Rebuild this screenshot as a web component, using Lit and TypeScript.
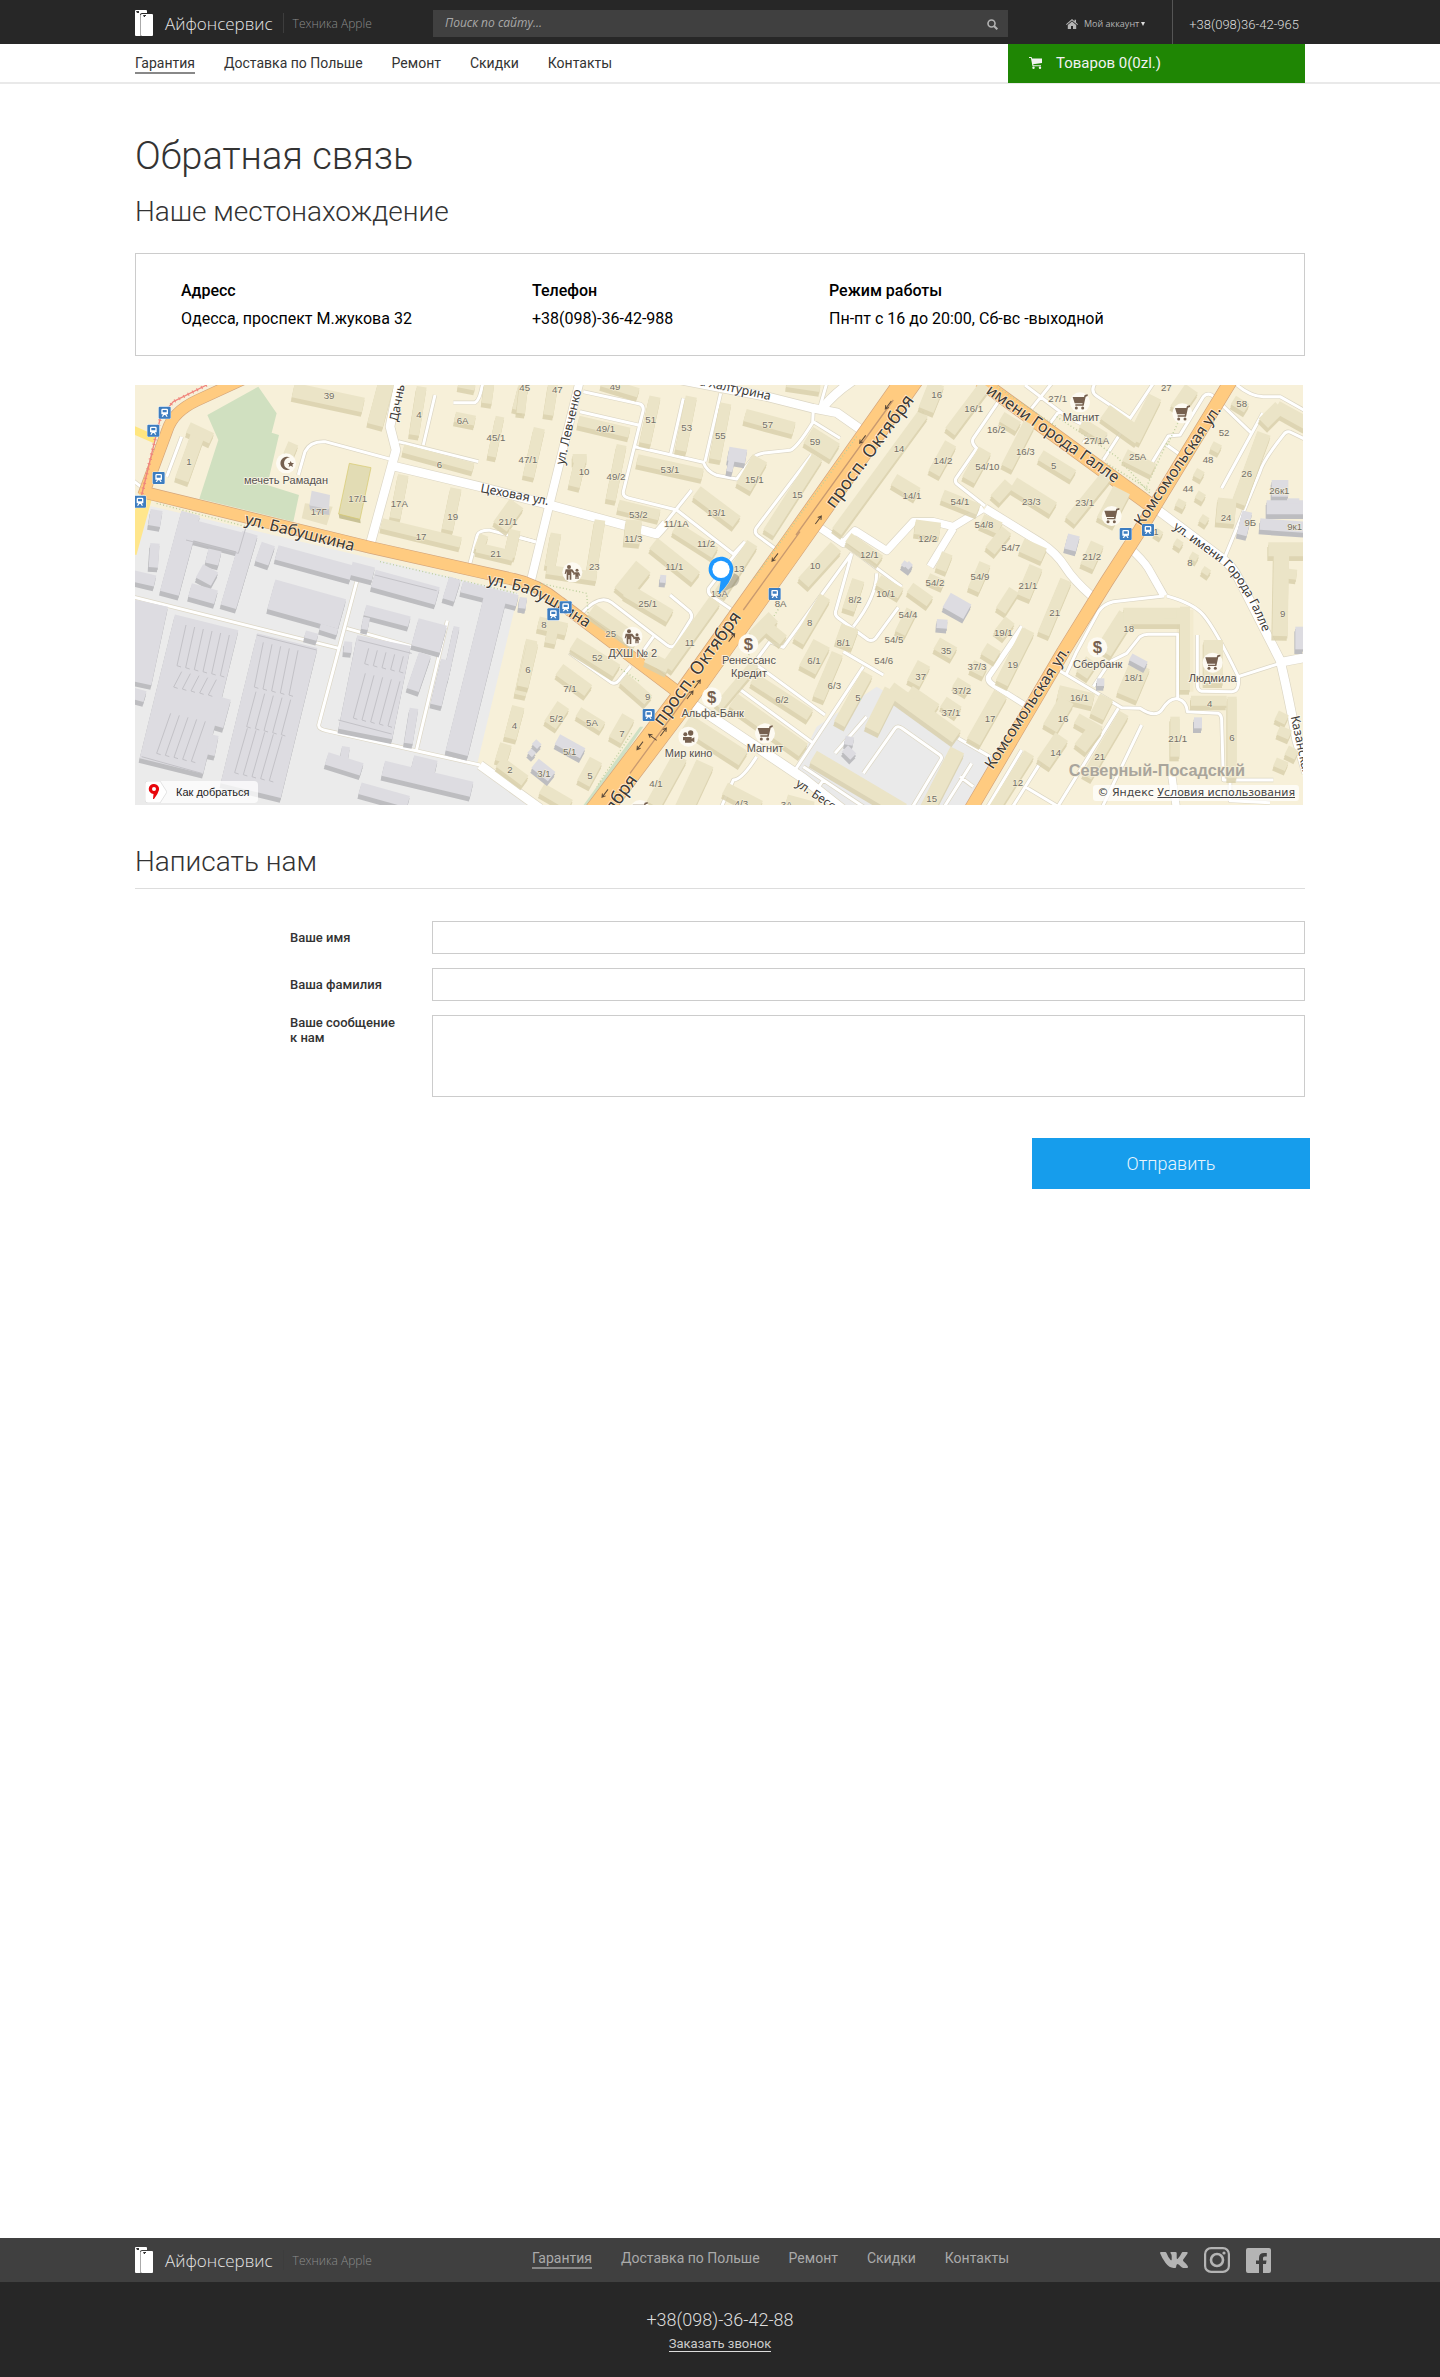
import { LitElement, html, css, svg } from "lit";
import { customElement, property } from "lit/decorators.js";

type Seg = [number, number, number, number, number];
type Mark = [string, number, number];

/* The map is drawn in three side by side sheets, each with its own origin. */
interface Sheet {
  dx: number;
  wide: [number, string][];
  lanes: string;
  beige: Seg[];
  gray: Seg[];
  numbers: Mark[];
}

const WEST: Sheet = {
  dx: 0,
  wide: [
    [26, "M790 258L1050 320L1260 375L1580 462L1608 430"],
    [26, "M808 0L780 140L798 210L720 495"],
    [26, "M1050 1155L1230 1285"],
  ],
  lanes:
    "M0 649L627 805M680 605L566 1035Q565 1048 590 1052L1050 1155M650 745L925 822M952 722L860 1108M155 170L110 290M505 285L525 215Q540 183 585 185L790 240M805 185L1045 245M915 45L880 195M970 68L1035 68Q1050 60 1058 10M1018 557L1042 465Q1048 450 1080 451L1215 485M0 295L40 325",
  beige: [
    [490, 30, 700, 75, 44], [768, 10, 735, 135, 48], [875, 20, 852, 165, 30], [975, 110, 1035, 122, 30],
    [1110, 110, 1085, 230, 26], [820, 205, 1030, 262, 26], [205, 160, 155, 300, 42], [175, 142, 245, 175, 34],
    [490, 190, 475, 225, 32], [820, 285, 795, 415, 32], [978, 325, 952, 450, 34], [755, 430, 992, 487, 32],
    [1040, 502, 1150, 528, 30], [1062, 465, 1045, 510, 28], [1155, 450, 1137, 530, 34], [1160, 370, 1110, 440, 50],
    [1078, 10, 1070, 70, 30], [1180, 20, 1162, 90, 32], [985, 12, 1035, 22, 20], [1205, 780, 1170, 945, 34],
    [1165, 980, 1140, 1075, 38], [1128, 1092, 1112, 1145, 36], [1108, 1145, 1185, 1202, 36],
  ],
  gray: [
    [182, 400, 118, 640, 58], [360, 460, 295, 680, 48], [170, 445, 345, 490, 60], [255, 510, 245, 552, 40],
    [242, 565, 220, 605, 52], [180, 630, 258, 652, 42], [80, 390, 72, 438, 36], [75, 490, 70, 562, 28],
    [10, 588, 75, 603, 34], [415, 492, 395, 550, 42], [440, 517, 665, 578, 44], [663, 565, 730, 582, 40],
    [730, 595, 922, 648, 54], [975, 595, 955, 660, 36], [995, 620, 1162, 662, 34], [1095, 655, 980, 1120, 68],
    [424, 643, 636, 702, 92], [705, 690, 838, 725, 32], [710, 712, 703, 748, 20], [855, 755, 940, 778, 84],
    [65, 670, 15, 905, 100], [230, 727, 124, 1158, 196], [472, 782, 362, 1232, 186], [762, 782, 706, 1062, 164],
    [885, 822, 848, 930, 38], [980, 740, 945, 900, 18], [950, 840, 918, 975, 34], [288, 955, 265, 1040, 30],
    [252, 1065, 240, 1125, 28], [852, 985, 835, 1090, 26], [590, 1135, 695, 1168, 38], [648, 1100, 640, 1150, 24],
    [760, 1165, 1025, 1228, 46], [848, 1145, 918, 1162, 40], [690, 1225, 835, 1265, 36], [1182, 655, 1175, 685, 18],
    [655, 785, 652, 818, 24], [525, 762, 562, 772, 22], [10, 940, 45, 950, 34], [570, 740, 622, 756, 20],
  ],
  numbers: [
    ["39", 597, 58], ["4", 867, 115], ["6А", 998, 132], ["45/1", 1098, 184], ["1", 177, 255],
    ["6", 928, 263], ["17/1", 683, 366], ["17Г", 566, 405], ["17А", 808, 381], ["19", 968, 421], ["17", 873, 479],
    ["21/1", 1134, 434], ["21", 1097, 532], ["4", 1153, 1048], ["2", 1140, 1178], ["47/1", 1194, 250],
  ],
};

const CENTER: Sheet = {
  dx: 1170,
  wide: [
    [24, "M180 0L88 375L32 605"],
    [26, "M430 -10L740 50L880 85L950 98L1027 152M905 88Q940 40 1010 -5"],
    [22, "M895 440L970 490L1005 452L1100 512L1180 425L1240 425L1300 440L1390 385M1300 445L1230 560"],
    [28, "M515 970L850 1195L970 1290"],
    [14, "M-10 1228L60 1285"],
  ],
  lanes:
    "M190 35L360 72Q374 78 368 98L310 335Q308 350 325 354L470 390L640 522L675 485M180 95L355 135M345 200L550 247Q560 275 590 286L650 297L700 232Q715 220 740 218L810 211Q830 205 878 128L880 85M490 55L452 222M602 40L555 245M875 225L708 445Q702 458 712 466L765 505M515 330L415 455M675 485L566 625Q562 640 575 648L640 692M450 645L510 695Q520 710 510 722L465 795Q456 806 442 796L275 668Q240 640 185 700M400 770L370 812M148 818L275 908Q287 914 296 902L332 858M920 10L900 80M880 125L960 175M995 520L790 802L750 785L605 980M970 490L1145 620M1070 580Q1070 650 1000 740M995 522L948 690Q942 704 955 714L1045 780Q1056 785 1066 776L1135 682M655 925L880 1090M710 855L915 1005M970 815L1090 885M1030 860L820 1178M1030 1180L1125 1045Q1132 1036 1145 1044L1260 1125Q1268 1132 1262 1140L1175 1285M1040 1010L945 1120M600 1290L640 1200Q665 1200 710 1130M850 1160L1030 1280M910 1200L890 1230M0 472L48 486",
  beige: [
    [100, 10, 85, 105, 30], [12, 10, 2, 100, 26], [245, 5, 355, 38, 28], [405, 50, 375, 190, 34],
    [175, 122, 328, 158, 30], [514, 50, 482, 212, 34], [617, 70, 585, 238, 34], [675, 105, 822, 145, 38],
    [865, 165, 945, 215, 56], [352, 238, 548, 282, 32], [200, 235, 158, 235, 26], [182, 235, 162, 320, 34],
    [305, 195, 272, 360, 30], [295, 375, 418, 405, 32], [342, 420, 335, 490, 48], [58, 145, 25, 290, 34],
    [720, 235, 670, 322, 50], [892, 230, 745, 458, 36], [530, 335, 650, 425, 40], [465, 442, 585, 518, 36],
    [400, 490, 528, 592, 40], [697, 490, 600, 640, 36], [108, 460, 90, 560, 32], [240, 420, 212, 590, 32],
    [80, 568, 230, 590, 28], [370, 560, 305, 640, 56], [320, 630, 450, 708, 42], [215, 688, 350, 782, 38],
    [585, 660, 440, 862, 38], [380, 830, 445, 862, 36], [160, 790, 290, 872, 42], [55, 728, 140, 748, 38],
    [100, 740, 90, 790, 32], [38, 790, 8, 920, 34], [118, 868, 205, 932, 40], [310, 895, 385, 960, 36],
    [130, 975, 90, 1035, 42], [175, 995, 248, 1040, 32], [325, 1010, 285, 1080, 42], [228, 1140, 190, 1210, 42],
    [65, 1225, 150, 1275, 34], [1210, 100, 950, 455, 34], [1122, 298, 1192, 340, 38], [985, 472, 1080, 540, 32],
    [948, 500, 850, 608, 42], [915, 650, 835, 785, 36], [760, 710, 700, 770, 40], [735, 735, 790, 780, 34],
    [1015, 600, 985, 690, 38], [1075, 600, 1142, 640, 34], [990, 740, 970, 795, 54], [905, 790, 862, 870, 56],
    [952, 820, 895, 955, 36], [1042, 880, 958, 1032, 36], [700, 895, 870, 1005, 36], [640, 960, 850, 1110, 46],
    [705, 850, 595, 980, 28], [500, 1025, 670, 1135, 50], [480, 1130, 400, 1275, 46], [555, 1150, 490, 1290, 56],
    [615, 1225, 720, 1280, 38], [880, 1130, 1150, 1290, 42], [800, 1258, 880, 1280, 30], [800, 10, 900, 25, 22],
    [1175, 690, 1140, 760, 34],
  ],
  gray: [
    [655, 205, 648, 246, 54], [635, 240, 628, 275, 18], [1148, 548, 1172, 566, 18], [430, 585, 428, 608, 18],
    [112, 1078, 188, 1120, 34], [45, 1150, 95, 1190, 36], [10, 652, 6, 685, 22], [42, 1085, 58, 1100, 20],
    [28, 1112, 42, 1125, 18], [975, 1105, 1000, 1130, 26], [990, 1070, 985, 1095, 26],
  ],
  numbers: [
    ["45", 14, 34], ["47", 112, 39], ["49", 285, 31], ["51", 392, 129], ["49/1", 257, 157], ["53", 500, 153],
    ["55", 601, 178], ["57", 743, 144], ["59", 885, 196], ["14", 1137, 215], ["53/1", 450, 278], ["10", 192, 286],
    ["49/2", 288, 299], ["15/1", 703, 308], ["15", 832, 354], ["14/1", 1176, 357], ["13/1", 589, 407],
    ["53/2", 355, 413], ["11/1А", 469, 440], ["11/3", 340, 487], ["11/2", 558, 502], ["12/1", 1048, 533],
    ["11/1", 463, 570], ["23", 223, 570], ["13", 657, 576], ["10", 885, 566], ["13А", 598, 652], ["8/2", 1005, 668],
    ["10/1", 1097, 650], ["8А", 782, 680], ["25/1", 383, 681], ["54/4", 1164, 714], ["8", 869, 739], ["8", 72, 744],
    ["25", 272, 770], ["11", 509, 799], ["8/1", 970, 797], ["54/5", 1122, 788], ["52", 232, 843], ["6/1", 882, 853],
    ["54/6", 1091, 853], ["6", 24, 879], ["7/1", 150, 936], ["6/3", 943, 926], ["9", 383, 960], ["5", 1014, 962],
    ["6/2", 786, 969], ["5/2", 109, 1025], ["5А", 216, 1039], ["7", 306, 1070], ["5/1", 149, 1124],
    ["3/1", 72, 1191], ["5", 210, 1196], ["4/1", 408, 1222], ["4/3", 664, 1280], ["3А", 800, 1284],
  ],
};

const EAST: Sheet = {
  dx: 2340,
  wide: [
    [24, "M225 385L395 490Q440 520 465 560Q490 600 545 648"],
    [22, "M655 500Q700 540 715 565L762 648"],
    [26, "M730 380L930 530Q970 560 985 595L1110 840Q1130 920 1160 1080L1190 1180M1105 848L1190 832"],
    [16, "M338 740L236 890Q232 905 250 915L345 975"],
    [22, "M785 1185L800 1290"],
  ],
  lanes:
    "M265 65L190 175Q182 188 200 205L138 295Q132 306 145 315L225 378M345 15L470 110L590 170M425 10L365 85M555 10Q540 35 560 48L660 115L730 10M660 115L580 240M450 90L420 130M548 145L520 190M725 250L775 168L810 165L880 50Q890 38 905 45L1025 160M1058 100L935 325M770 195L808 222M975 10Q1020 50 1060 50L1110 50L1190 95M1190 180L1140 156Q1128 152 1120 165Q1060 240 1050 275L945 530M762 648L610 665Q580 672 565 695L500 815L470 880M770 648Q850 670 880 705Q915 745 985 890Q990 935 965 935L875 934Q862 930 862 915L862 765M985 890L1110 850M445 870L635 983L690 985Q735 1015 755 990Q780 950 805 957Q830 965 832 995L925 1000Q935 1005 935 1020L940 1200L1090 1200M550 920L600 845L650 820L690 770Q700 763 715 763L803 763L803 955M625 985L440 1285M695 1035L575 1285M335 1110L230 1285M390 1150L305 1285M345 1220L445 1280M145 1075L240 1130M185 1150L100 1285M150 1190L190 1220M960 1205L960 1262L1080 1268",
  beige: [
    [80, 10, 48, 90, 48], [225, 15, 120, 155, 36], [275, 110, 325, 140, 32], [358, 130, 290, 262, 36],
    [122, 190, 72, 280, 38], [225, 210, 175, 300, 42], [392, 225, 490, 285, 34], [310, 310, 430, 385, 42],
    [298, 310, 255, 358, 36], [595, 280, 480, 422, 36], [635, 330, 585, 425, 56], [585, 95, 690, 170, 50],
    [735, 50, 670, 180, 42], [845, 25, 800, 90, 46], [645, 225, 730, 268, 38], [515, 128, 585, 172, 30],
    [970, 60, 1010, 85, 30], [1062, 160, 985, 370, 42], [952, 355, 945, 430, 56], [1060, 130, 1110, 80, 40],
    [1100, 80, 1190, 130, 38], [905, 195, 930, 208, 26], [855, 275, 878, 288, 26], [800, 365, 824, 378, 24],
    [872, 412, 892, 425, 24], [860, 342, 882, 355, 24], [735, 452, 755, 465, 20], [795, 484, 815, 497, 22],
    [878, 566, 898, 580, 20], [842, 524, 862, 536, 22], [1115, 490, 1110, 768, 46], [1075, 508, 1190, 508, 42],
    [1110, 578, 1160, 584, 30], [98, 345, 205, 388, 34], [215, 420, 270, 445, 38], [15, 440, 90, 450, 44],
    [290, 450, 240, 512, 36], [335, 495, 402, 525, 42], [112, 520, 92, 570, 34], [225, 550, 190, 630, 36],
    [562, 490, 530, 560, 42], [378, 560, 340, 650, 42], [312, 630, 272, 692, 34], [468, 600, 400, 762, 36],
    [0, 622, 60, 665, 34], [55, 592, 100, 612, 26], [300, 720, 265, 765, 36], [80, 790, 132, 820, 40],
    [222, 805, 262, 830, 38], [185, 855, 225, 875, 34], [42, 850, 10, 910, 42], [135, 905, 175, 930, 32],
    [100, 965, 145, 995, 36], [355, 750, 275, 910, 40], [272, 940, 190, 1085, 44], [650, 705, 580, 815, 52],
    [640, 708, 840, 708, 50], [825, 680, 825, 930, 30], [545, 840, 515, 885, 40], [690, 855, 650, 950, 64],
    [445, 935, 550, 960, 40], [470, 960, 420, 1045, 48], [560, 1040, 510, 1105, 42], [500, 1015, 570, 1055, 34],
    [590, 950, 560, 1010, 44], [455, 1070, 400, 1150, 46], [642, 1000, 530, 1190, 32], [358, 1120, 250, 1290, 34],
    [795, 1010, 795, 1130, 28], [843, 962, 950, 962, 30], [966, 950, 966, 1195, 28], [910, 780, 910, 910, 58],
    [1100, 1005, 1130, 1020, 30], [1105, 1050, 1140, 1065, 30], [1130, 1110, 1160, 1125, 30],
    [1095, 1145, 1130, 1160, 28], [142, 1110, 50, 1290, 46], [-60, 925, 140, 1070, 44], [-55, 930, -115, 1050, 46],
    [0, 930, 80, 985, 30], [780, 690, 780, 715, 40],
  ],
  gray: [
    [1110, 300, 1110, 350, 50], [1070, 382, 1190, 382, 42], [1050, 432, 1190, 442, 34], [1012, 395, 995, 465, 30],
    [492, 465, 480, 510, 36], [110, 660, 172, 695, 50], [97, 718, 95, 745, 32], [662, 830, 708, 855, 22],
    [572, 895, 572, 918, 22], [864, 1012, 864, 1045, 24], [1168, 740, 1168, 808, 24], [1150, 355, 1150, 370, 36],
    [-10, 550, 2, 562, 20],
  ],
  numbers: [
    ["16", 80, 55], ["16/1", 191, 95], ["27/1", 443, 67], ["27", 769, 32], ["58", 995, 80], ["16/2", 259, 160],
    ["52", 942, 168], ["27/1А", 560, 191], ["16/3", 346, 224], ["25А", 683, 240], ["14/2", 99, 252], ["54/10", 232, 271],
    ["5", 431, 267], ["48", 894, 249], ["26", 1010, 292], ["44", 834, 337], ["26к1", 1108, 341], ["54/1", 150, 375],
    ["23/3", 364, 375], ["23/1", 524, 379], ["24", 948, 422], ["9Б", 1021, 439], ["9к1", 1154, 449],
    ["54/8", 222, 443], ["12/2", 53, 487], ["54/7", 302, 513], ["21/2", 545, 539], ["8", 840, 557], ["54/2", 75, 618],
    ["54/9", 210, 600], ["21/1", 354, 628], ["9", 1118, 710], ["21", 434, 707], ["18", 656, 757], ["19/1", 280, 769],
    ["35", 108, 821], ["19", 308, 864], ["37/3", 201, 870], ["37", 32, 901], ["18/1", 671, 902], ["37/2", 155, 941],
    ["16/1", 508, 963], ["4", 899, 981], ["37/1", 123, 1009], ["17", 240, 1027], ["16", 459, 1027], ["6", 966, 1083],
    ["21/1", 803, 1086], ["14", 437, 1129], ["21", 569, 1141], ["12", 323, 1218], ["15", 65, 1266], ["1", 738, 465],
  ],
};

const SHEETS = [WEST, CENTER, EAST];

/* x, y, run x, run y, count: roof ribs on the long factory halls */
const RIBS: Seg[] = [
  [168, 735, -27, 122, 6], [155, 875, -24, 46, 5], [122, 1000, -42, 120, 5], [400, 787, -27, 134, 5],
  [378, 935, -28, 105, 5], [352, 1045, -38, 133, 5], [716, 805, -12, 46, 5], [706, 880, -36, 134, 5],
];

const STOPS = [
  [104, 98], [70, 152], [86, 294], [30, 365], [1270, 703], [1307, 682], [1934, 642], [1556, 1005], [2987, 462], [3054, 450],
];
const CARTS = [[1905, 1060], [1530, 1290], [2850, 67], [3157, 100], [2945, 408], [3248, 848]];
const DOLLARS = [[1855, 792], [1745, 952], [2902, 802]];
const FAMILIES = [[1327, 577], [1507, 770]];
const PLACES: Mark[] = [
  ["мечеть Рамадан", 468, 311], ["ДХШ № 2", 1508, 832], ["Ренессанс", 1857, 853], ["Кредит", 1857, 891],
  ["Альфа-Банк", 1748, 1011], ["Мир кино", 1676, 1130], ["Магнит", 1905, 1115], ["Магнит", 2853, 124],
  ["Сбербанк", 2903, 863], ["Людмила", 3248, 905],
];
/* label, x, y, angle, size */
const STREETS: [string, number, number, number, number][] = [
  ["ул. Бабушкина", 342, 432, 14, 48], ["Цеховая ул.", 1050, 336, 11, 37], ["Дачны", 803, 126, -79, 37],
  ["ул. Левченко", 1302, 256, -77, 37], ["на Халтурина", 1684, 10, 12, 37], ["просп. Октября", 2112, 388, -53.5, 54],
  ["просп. Октября", 1596, 1040, -54, 54], ["имени Города Галле", 2566, 38, 35, 48],
  ["Комсомольская ул.", 2588, 1170, -57, 46], ["Комсомольская ул.", 3036, 442, -56, 46],
  ["Казанская", 3482, 1010, 78, 37], ["ул. Бессонова", 1995, 1216, 34, 36],
];

const pathOf = (b: Seg, dy = 0, dx = 0) => `M${b[0] + dx} ${b[1] + dy}L${b[2] + dx} ${b[3] + dy}`;

const blocks = (list: Seg[], kind: string) => svg`
  <g class="side-${kind}">${list.map((b) => svg`<path d=${pathOf(b, 14, -3)} stroke-width=${b[4]} /><path d=${pathOf(b, 7, -1)} stroke-width=${b[4]} />`)}</g>
  <g class="top-${kind}">${list.map((b) => svg`<path d=${pathOf(b)} stroke-width=${b[4]} />`)}</g>`;

@customElement("city-map")
export class CityMap extends LitElement {
  static styles = css`
    :host { display: block; position: relative; height: 420px; overflow: hidden; }
    .canvas { display: block; width: 100%; height: 100%; background: #f7f0d9; }
    .line { fill: none; stroke-linejoin: round; }
    .casing { stroke: #dcd6c4; }
    .white { stroke: #fff; }
    .orange-edge { stroke: #d3a57c; }
    .orange { stroke: #ffcb80; }
    .side-beige { stroke: #dad1ad; opacity: 0.85; }
    .top-beige { stroke: #ebe4c7; }
    .side-gray { stroke: #bdbdc0; }
    .top-gray { stroke: #dddce1; }
    .number { font: 29px "Liberation Sans", sans-serif; fill: #716e66; stroke: #f7f0d9; stroke-width: 3; paint-order: stroke; text-anchor: middle; }
    .place { font: 33px "Liberation Sans", sans-serif; fill: #55514e; stroke: #faf5e6; stroke-width: 5; paint-order: stroke; text-anchor: middle; }
    .street { font-family: "Noto Sans", "Open Sans", sans-serif; fill: #3c3935; stroke: #fff; stroke-opacity: 0.6; stroke-width: 5; paint-order: stroke; }
    .district { font: bold 49px "Liberation Sans", sans-serif; fill: #a9a59c; stroke: #f7f0d9; stroke-width: 5; paint-order: stroke; }
    .dollar { font: bold 50px "Liberation Sans", sans-serif; fill: #76604f; text-anchor: middle; }
    .glyph { fill: #76604f; }
    .route { position: absolute; left: 10px; bottom: 2px; display: flex; align-items: center; gap: 9px; height: 22px; padding: 0 9px 0 0; border: 0; border-radius: 4px; background: rgba(255, 255, 255, 0.75); color: #222; font: 11px "Liberation Sans", sans-serif; cursor: pointer; }
    .route svg { width: 22px; height: 22px; }
    .terms { position: absolute; right: 4px; bottom: 4px; padding: 1px 4px; border-radius: 3px; background: rgba(255, 255, 255, 0.7); color: #444; font: 11px/14px "DejaVu Sans", sans-serif; white-space: nowrap; }
    .terms a { color: inherit; }
  `;

  private roads(extra: number) {
    return SHEETS.map(
      (s) => svg`<g transform="translate(${s.dx} 0)">
        <path d=${s.lanes} stroke-width=${9 + extra} />
        ${s.wide.map(([w, d]) => svg`<path d=${d} stroke-width=${w + extra} />`)}
      </g>`
    );
  }

  private arterials(extra: number) {
    return svg`
      <path d="M345 -5L200 62Q130 95 112 150L40 345" stroke-width=${32 + extra} />
      <path d="M35 335L720 502L1150 598Q1220 612 1290 668L1635 930" stroke-width=${34 + extra} />
      <path d="M2345 -10L1985 500L1672 940L1400 1300" stroke-width=${76 + extra} />
      <path d="M2550 2L3065 378" stroke-width=${40 + extra} />
      <path d="M3310 -10L3030 450L2930 605L2800 815L2515 1300" stroke-width=${38 + extra} />`;
  }

  render() {
    return html`
      <svg class="canvas" viewBox="15 15 3504 1260" preserveAspectRatio="xMidYMid slice" role="img" aria-label="Карта">
        <path fill="#ebebeb" d="M62 378L1165 640L1042 1150L1215 1290H0V560Z" />
        <path fill="#eaeaea" d="M2060 1040L2240 920L2590 1130L2500 1290H2120L1995 1172Z" />
        <path fill="#f3ebcf" d="M3140 690H3190V935H3140Z" />
        <path fill="#d0e0c0" d="M385 20L440 100L425 158L447 165L412 315L507 345L490 425L208 356L265 180L232 105Z" />
        <path fill="#cfe0c4" d="M1540 1040L1370 1290H1350L1530 1040Z" />
        <g class="line"><path d="M0 145L75 178" stroke="#ffe680" stroke-width="24" /><path d="M48 345L0 520" stroke="#ffe68c" stroke-width="40" /></g>
        <g class="line casing">${this.roads(4)}</g>
        <g class="line white">${this.roads(0)}</g>
        <g class="line orange-edge">${this.arterials(4)}</g>
        <g class="line orange">${this.arterials(0)}</g>
        <g class="line" stroke="#c99a6f" stroke-width="4"><path d="M2290 60L1998 465M2010 455L1840 690M1680 935L1500 1180" /></g>
        <g class="line" stroke="#bccf9c" stroke-width="4" stroke-dasharray="3 7">
          <path d="M80 370L350 440M750 545L1160 640M1230 610L1370 640L1375 710M1340 780L1530 905M2180 170L1870 600M2380 95L2130 440M1950 680L1840 850M1505 1060L1400 1220M2600 20L2780 140M2780 110L2960 230L3060 340M3110 190L3045 330M3190 30L3110 200M2930 250L3060 330" />
        </g>
        <g class="line" stroke="#f0857c" stroke-width="4"><path d="M230 15L130 65L92 110L35 345" /><path d="M230 15L130 65L92 110L35 345" stroke-width="10" stroke-dasharray="3 12" /></g>
        ${SHEETS.map((s) => svg`<g class="line" transform="translate(${s.dx} 0)">${blocks(s.beige, "beige")}${blocks(s.gray, "gray")}</g>`)}
        <path fill="#e9e1c3" d="M525 370L608 380L590 436L515 415Z" />
        <path fill="#c9c8cc" d="M538 375L598 385V405L580 403L540 390Z" /><path fill="#dbdade" d="M545 332L600 345L597 388L538 376Z" />
        <path fill="#c9c296" d="M626 400L690 415L692 430L628 415Z" /><path fill="#e2dcb4" stroke="#d6c96a" stroke-width="2" d="M658 250L723 263L690 418L626 402Z" />
        <g class="line" stroke="#c3c2c7" stroke-width="3">
          ${RIBS.map(([x, y, rx, ry, n]) => Array.from({ length: n }, (_, i) => svg`<path d="M${x + i * 26} ${y + i * 6}l${rx} ${ry}l12 4" />`))}
          <path d="M168 480L325 520L347 445M735 585L920 632M685 780L845 820M625 1020L785 1062M35 1130L215 1180M380 765L560 810" />
        </g>
        ${SHEETS.map((s) => svg`<g transform="translate(${s.dx} 0)">${s.numbers.map(([t, x, y]) => svg`<text class="number" x=${x} y=${y}>${t}</text>`)}</g>`)}
        ${STREETS.map(([t, x, y, a, size]) => svg`<text class="street" font-size=${size} transform="translate(${x} ${y}) rotate(${a})">${t}</text>`)}
        <text class="street" font-size="54" text-anchor="end" transform="translate(1524 1200) rotate(-54)">Октября</text>
        <path id="bend-west" fill="none" d="M1070 612L1170 634Q1240 655 1400 765" />
        <text class="street" font-size="47"><textPath href="#bend-west">ул. Бабушкина</textPath></text>
        <path id="bend-east" fill="none" d="M3128 445L3270 548Q3345 610 3412 790" />
        <text class="street" font-size="37"><textPath href="#bend-east">ул. имени Города Галле</textPath></text>
        <text class="district" x="2816" y="1188">Северный-Посадский</text>
        <g fill="none" stroke="#5b4a3a" stroke-width="3">
          ${[[2275, 75, 127], [2198, 178, 127], [2065, 420, -53], [1935, 532, 127], [1805, 773, -53], [1702, 912, -53], [1680, 945, -53], [1600, 1056, -53], [1568, 1072, 217], [1530, 1097, 127], [1425, 1240, 127]].map(
            ([x, y, a]) => svg`<path transform="translate(${x} ${y}) rotate(${a})" d="M-15 0H15M5 -6L15 0L5 6" />`
          )}
        </g>
        ${STOPS.map(([x, y]) => svg`<g transform="translate(${x} ${y})"><rect x="-19" y="-19" width="38" height="38" rx="4" fill="#fff" /><rect x="-18" y="-18" width="36" height="36" rx="3" fill="#3d7dc0" /><path fill="#fff" fill-rule="evenodd" d="M-10 -8Q-10 -12 -6 -12H6Q10 -12 10 -8V5H5L9 12H5L2 7H-2L-5 12H-9L-5 5H-10ZM-6 -8V-1H6V-8Z" /></g>`)}
        ${[...CARTS, ...DOLLARS, ...FAMILIES, [468, 250], [1675, 1070]].map(([x, y]) => svg`<circle cx=${x} cy=${y} r="30" fill="#fdfaf2" />`)}
        ${CARTS.map(([x, y]) => svg`<g class="glyph" transform="translate(${x} ${y})"><path d="M-22 -16H12L14 -22L23 -24V-19L17 -17L11 10H-14V6H7L8 3H-16Z" /><circle cx="-11" cy="17" r="4.500" /><circle cx="8" cy="17" r="4.500" /></g>`)}
        ${DOLLARS.map(([x, y]) => svg`<text class="dollar" x=${x} y=${y + 17}>$</text>`)}
        ${FAMILIES.map(([x, y]) => svg`<g class="glyph" transform="translate(${x} ${y})"><circle cx="-10" cy="-16" r="6" /><path d="M-20 -9H0L8 2L4 5L-3 -3V22H-8V8H-12V22H-17V-3L-20 5H-23Z" /><circle cx="14" cy="-6" r="4.500" /><path d="M8 0H20L24 10H21L19 6V20H15V13H13V20H9V6L3 8V5Z" /></g>`)}
        <g class="glyph"><path d="M480 232A20 20 0 1 0 480 268A16 16 0 1 1 480 232Z" /><path d="M482 243L485 249L492 249L487 254L489 261L482 257L476 261L478 254L473 249L479 249Z" /></g>
        <g class="glyph" transform="translate(1675 1070)"><circle cx="-9" cy="-7" r="6" /><circle cx="7" cy="-11" r="8" /><path d="M-16 1H10V6L18 2V17L10 13V18H-10V11H-16Z" /></g>
        ${PLACES.map(([t, x, y]) => svg`<text class="place" x=${x} y=${y}>${t}</text>`)}
        <path d="M1775 638Q1800 610 1812 580Q1840 590 1820 615Z" fill="#000" opacity="0.2" />
        <path fill="#1e98ff" d="M1766 643L1772 604A37 37 0 1 1 1809 575Q1803 608 1766 643Z" />
        <circle cx="1773" cy="568" r="26" fill="#fff" />
      </svg>
      <button class="route" type="button">
        <svg viewBox="0 0 22 22" aria-hidden="true"><path d="M3 0H15L22 11L15 22H3Q0 22 0 19V3Q0 0 3 0Z" fill="#fff" stroke="#e3e3e3" /><path fill="#e8060c" fill-rule="evenodd" d="M9 3A5 5 0 0 1 14 9Q13 13 9 18H8L8.500 13A5 5 0 0 1 9 3ZM9 6A2 2 0 1 0 9 10A2 2 0 1 0 9 6Z" /></svg>
        Как добраться
      </button>
      <div class="terms">© Яндекс <a href="#terms">Условия использования</a></div>
    `;
  }
}

@customElement("brand-mark")
export class BrandMark extends LitElement {
  static styles = css`
    :host { display: flex; align-items: center; }
    .home { display: flex; align-items: center; color: #e6e6e6; text-decoration: none; }
    .phones { width: 18px; height: 26px; margin-right: 12px; }
    .name { padding-top: 2px; font: 300 17px/24px "Open Sans", "Noto Sans", sans-serif; }
    .tag { margin-left: 10px; padding: 2px 0 0 9px; border-left: 1px solid #3d3d3d; font: 300 12px/18px "Open Sans", "Noto Sans", sans-serif; color: #8d8d8d; }
  `;
  render() {
    return html`
      <a class="home" href="#home">
        <svg class="phones" viewBox="0 0 18 26" aria-hidden="true">
          <path fill="#fff" d="M1 0H11Q12 0 12 1V3H7Q5 3 5 5V26H1Q0 26 0 25V1Q0 0 1 0Z" />
          <path fill="#fff" d="M7 4H17Q18 4 18 5V25Q18 26 17 26H7Q6 26 6 25V5Q6 4 7 4Z" />
          <path fill="#333" d="M1 1H4V3H2ZM8 5H11V6H10V7H9Z" />
          <path fill="#aaa" d="M5 5H6V26H5Z" />
        </svg>
        <span class="name">Айфонсервис</span>
      </a>
      <span class="tag">Техника Apple</span>
    `;
  }
}

@customElement("site-menu")
export class SiteMenu extends LitElement {
  @property({ type: String }) label = "";
  static styles = css`
    :host { display: block; }
    .list { display: flex; flex-wrap: wrap; column-gap: 29px; margin: 0; padding: 0; list-style: none; font: 14px/18px Roboto, sans-serif; }
    .link { display: block; color: inherit; text-decoration: none; border-bottom: 2px solid transparent; }
    .current { border-color: #888; }
  `;
  render() {
    const items = ["Гарантия", "Доставка по Польше", "Ремонт", "Скидки", "Контакты"];
    return html`<nav aria-label=${this.label}>
      <ul class="list">
        ${items.map((t, i) => html`<li><a class="link ${i === 0 ? "current" : ""}" href="#p${i}">${t}</a></li>`)}
      </ul>
    </nav>`;
  }
}

@customElement("app-root")
export class AppRoot extends LitElement {
  static styles = css`
    :host { display: flex; flex-direction: column; min-height: 100vh; background: #fff; color: #333; font-family: Roboto, sans-serif; }
    * { box-sizing: border-box; }
    .wrap { width: 100%; max-width: 1170px; margin: 0 auto; }
    .top { background: #272727; }
    .bar { display: grid; grid-template-columns: 298px minmax(0, 1fr) 297px; align-items: center; min-height: 44px; }
    .bar brand-mark { padding-top: 2px; }
    .search { display: flex; align-items: center; height: 27px; margin-top: 3px; padding: 0 10px 0 12px; background: #404040; }
    .query { flex: 1; min-width: 0; height: 27px; padding: 0 0 2px; border: 0; outline: 0; background: none; color: #ddd; font: italic 12px "Open Sans", sans-serif; }
    .query::placeholder { color: #a9a9a9; opacity: 1; }
    .find { display: flex; padding: 2px 0 0; border: 0; background: none; color: #b4b4b4; cursor: pointer; }
    .find svg { width: 11px; height: 11px; }
    .side { display: flex; align-self: stretch; align-items: center; justify-content: space-between; }
    .account { display: flex; align-items: center; gap: 6px; margin-left: 58px; padding: 4px 0 0; border: 0; background: none; color: #b4b4b4; font: 9px/12px "Open Sans", sans-serif; cursor: pointer; }
    .account svg { width: 12px; height: 10px; }
    .more { display: flex; align-items: center; gap: 2px; }
    .more::after { content: ""; border: 2px solid transparent; border-top: 4px solid #ddd; border-bottom: 0; }
    .phone { display: flex; align-items: center; align-self: stretch; padding: 4px 6px 0 16px; border-left: 1px solid #555; color: #ddd; font-size: 13px; font-weight: 300; text-decoration: none; }
    .under { border-bottom: 2px solid #e9e9e9; }
    .row { display: flex; align-items: stretch; justify-content: space-between; height: 38px; }
    .row site-menu { padding-top: 10px; }
    .cart { display: flex; align-items: center; gap: 14px; width: 297px; height: 39px; padding: 0 0 1px 21px; border: 0; background: #1f8604; color: #f2f2f2; font: 15px Roboto, sans-serif; cursor: pointer; }
    .cart svg { width: 13px; height: 12px; }
    main { flex: 1; padding: 47px 0 40px; }
    h1 { margin: 0; font-size: 38px; font-weight: 300; line-height: 50px; }
    h2 { margin: 0; font-size: 28px; font-weight: 300; line-height: 34px; }
    .place { margin-top: 14px; }
    .facts { display: flex; margin: 24px 0 29px; padding: 23px 45px 19px; min-height: 103px; border: 1px solid #ccc; color: #000; font-size: 16px; line-height: 28px; }
    .fact { flex: 297 1 0; }
    .fact:first-child { flex-grow: 351; }
    .fact:last-child { flex-grow: 430; }
    .facts dt { font-weight: 500; }
    .facts dd { margin: 0; }
    city-map { margin-right: 2px; }
    .write { margin-top: 40px; padding-bottom: 9px; border-bottom: 1px solid #ddd; }
    .form { display: grid; grid-template-columns: 142px minmax(0, 1fr); row-gap: 14px; margin: 32px 0 0; padding-left: 155px; }
    .label { align-self: center; font-size: 13px; font-weight: 500; line-height: 15px; }
    .label.first { align-self: start; }
    .field { display: block; width: 100%; height: 33px; padding: 4px 8px; border: 1px solid #ccc; border-radius: 0; background: #fff; font: 14px Roboto, sans-serif; resize: none; }
    .area { height: 82px; }
    .send { grid-column: 2; justify-self: end; width: 278px; height: 51px; margin: 27px -5px 0 0; border: 0; background: #169dec; color: #e8f5fd; font: 300 18px Roboto, sans-serif; cursor: pointer; }
    .links { background: #404040; }
    .foot { display: flex; align-items: center; height: 44px; }
    .foot brand-mark { width: 397px; }
    .foot site-menu { padding-bottom: 2px; color: #aaa; }
    .social { display: flex; align-items: center; gap: 16px; margin-left: auto; padding-right: 34px; }
    .social a { display: flex; }
    .contact { display: flex; flex-direction: column; align-items: center; height: 95px; padding-top: 26px; background: #272727; color: #ddd; }
    .call { color: inherit; font-size: 18px; font-weight: 300; line-height: 24px; text-decoration: none; }
    .order { margin-top: 4px; border-bottom: 1px solid #ddd; color: #ccc; font-size: 13px; line-height: 15px; text-decoration: none; }
    @media (max-width: 1000px) {
      .wrap { padding-left: 16px; padding-right: 16px; }
      .bar { grid-template-columns: 1fr; row-gap: 8px; }
      .row, .foot { height: auto; flex-wrap: wrap; row-gap: 8px; }
      .facts { flex-direction: column; }
      .form { padding-left: 0; }
      .send { margin-right: 0; }
    }
  `;

  render() {
    return html`
      <header>
        <div class="top">
          <div class="wrap bar">
            <brand-mark></brand-mark>
            <form class="search" role="search">
              <input class="query" type="search" aria-label="Поиск по сайту" placeholder="Поиск по сайту..." />
              <button class="find" type="button" aria-label="Найти">
                <svg viewBox="0 0 11 11" fill="none" stroke="currentColor" stroke-width="1.600" aria-hidden="true"><circle cx="4.500" cy="4.500" r="3.500" /><path d="M7 7L10.300 10.300" stroke-width="2" /></svg>
              </button>
            </form>
            <div class="side">
              <button class="account" type="button">
                <svg viewBox="0 0 12 10" fill="currentColor" aria-hidden="true"><path d="M6 0L8.500 2.200V.8H10V3.600L12 5.300L11.400 6L6 1.600L.6 6L0 5.300Z" /><path d="M6 2.500L10.200 6V10H7V7H5V10H1.800V6Z" /></svg>
                <span class="more">Мой аккаунт</span>
              </button>
              <a class="phone" href="tel:+380983642965">+38(098)36-42-965</a>
            </div>
          </div>
        </div>
        <div class="under">
          <div class="wrap row">
            <site-menu label="Главное меню"></site-menu>
            <button class="cart" type="button">
              <svg viewBox="0 0 13 12" fill="currentColor" aria-hidden="true"><path d="M0 0H2.600L3 1.500H13V6L4.200 7.200L4.400 8.200H12V9.200H3.500L1.900 1H0Z" /><circle cx="4.500" cy="10.800" r="1.200" /><circle cx="11" cy="10.800" r="1.200" /></svg>
              Товаров 0(0zl.)
            </button>
          </div>
        </div>
      </header>
      <main>
        <div class="wrap">
          <h1>Обратная связь</h1>
          <h2 class="place">Наше местонахождение</h2>
          <dl class="facts">
            <div class="fact"><dt>Адресс</dt><dd>Одесса, проспект М.жукова 32</dd></div>
            <div class="fact"><dt>Телефон</dt><dd>+38(098)-36-42-988</dd></div>
            <div class="fact"><dt>Режим работы</dt><dd>Пн-пт с 16 до 20:00, Сб-вс -выходной</dd></div>
          </dl>
          <city-map></city-map>
          <h2 class="write">Написать нам</h2>
          <form class="form">
            <label class="label" for="name">Ваше имя</label>
            <input class="field" id="name" type="text" />
            <label class="label" for="surname">Ваша фамилия</label>
            <input class="field" id="surname" type="text" />
            <label class="label first" for="message">Ваше сообщение<br />к нам</label>
            <textarea class="field area" id="message"></textarea>
            <button class="send" type="button">Отправить</button>
          </form>
        </div>
      </main>
      <footer>
        <div class="links">
          <div class="wrap foot">
            <brand-mark></brand-mark>
            <site-menu label="Меню в подвале"></site-menu>
            <div class="social">
              <a href="#vk" aria-label="ВКонтакте"><svg width="28" height="16" viewBox="0 0 28 16" fill="#b4b4b4" aria-hidden="true"><path d="M13.700 16H15.300Q16.200 15.800 16.200 14.500Q16.200 12 17.600 12Q18.800 12.100 20.800 14.600Q22 16 23.300 16H27Q28.600 15.600 27.700 14Q26.800 12.200 23.400 9.200Q22.700 8.300 23.400 7.300Q26.800 2.900 27.600 1.200Q28 0 26.800 0H22.800Q22 0 21.600 .9Q19.800 4.900 17.700 6.700Q16.800 7.300 16.700 5.900V1.200Q16.700 0 15.400 0H11Q10 .3 10.600 1.300Q11.700 2.200 11.700 4V7.500Q11.600 8.800 10.600 8.100Q8.200 5.500 6.500 1Q6.200 0 5.200 0H.9Q-.1 .2 .1 1.200Q2 6 5.600 11.100Q9.200 16 13.700 16Z" /></svg></a>
              <a href="#instagram" aria-label="Instagram"><svg width="26" height="26" viewBox="0 0 26 26" fill="none" stroke="#b4b4b4" stroke-width="2.200" aria-hidden="true"><rect x="1.100" y="1.100" width="23.800" height="23.800" rx="6" /><circle cx="13" cy="13" r="6" stroke-width="2.600" /><circle cx="20" cy="6" r="1.600" fill="#b4b4b4" stroke="none" /></svg></a>
              <a href="#facebook" aria-label="Facebook"><svg width="25" height="25" viewBox="0 0 25 25" fill="#b4b4b4" aria-hidden="true"><path d="M2 0H23Q25 0 25 2V23Q25 25 23 25H17V16H20L20.500 12.500H17V10Q17 8.500 18.500 8.500H20.800V5H18Q13 5 13 10V12.500H10V16H13V25H2Q0 25 0 23V2Q0 0 2 0Z" /></svg></a>
            </div>
          </div>
        </div>
        <div class="contact">
          <a class="call" href="tel:+38098364288">+38(098)-36-42-88</a>
          <a class="order" href="#call">Заказать звонок</a>
        </div>
      </footer>
    `;
  }
}
